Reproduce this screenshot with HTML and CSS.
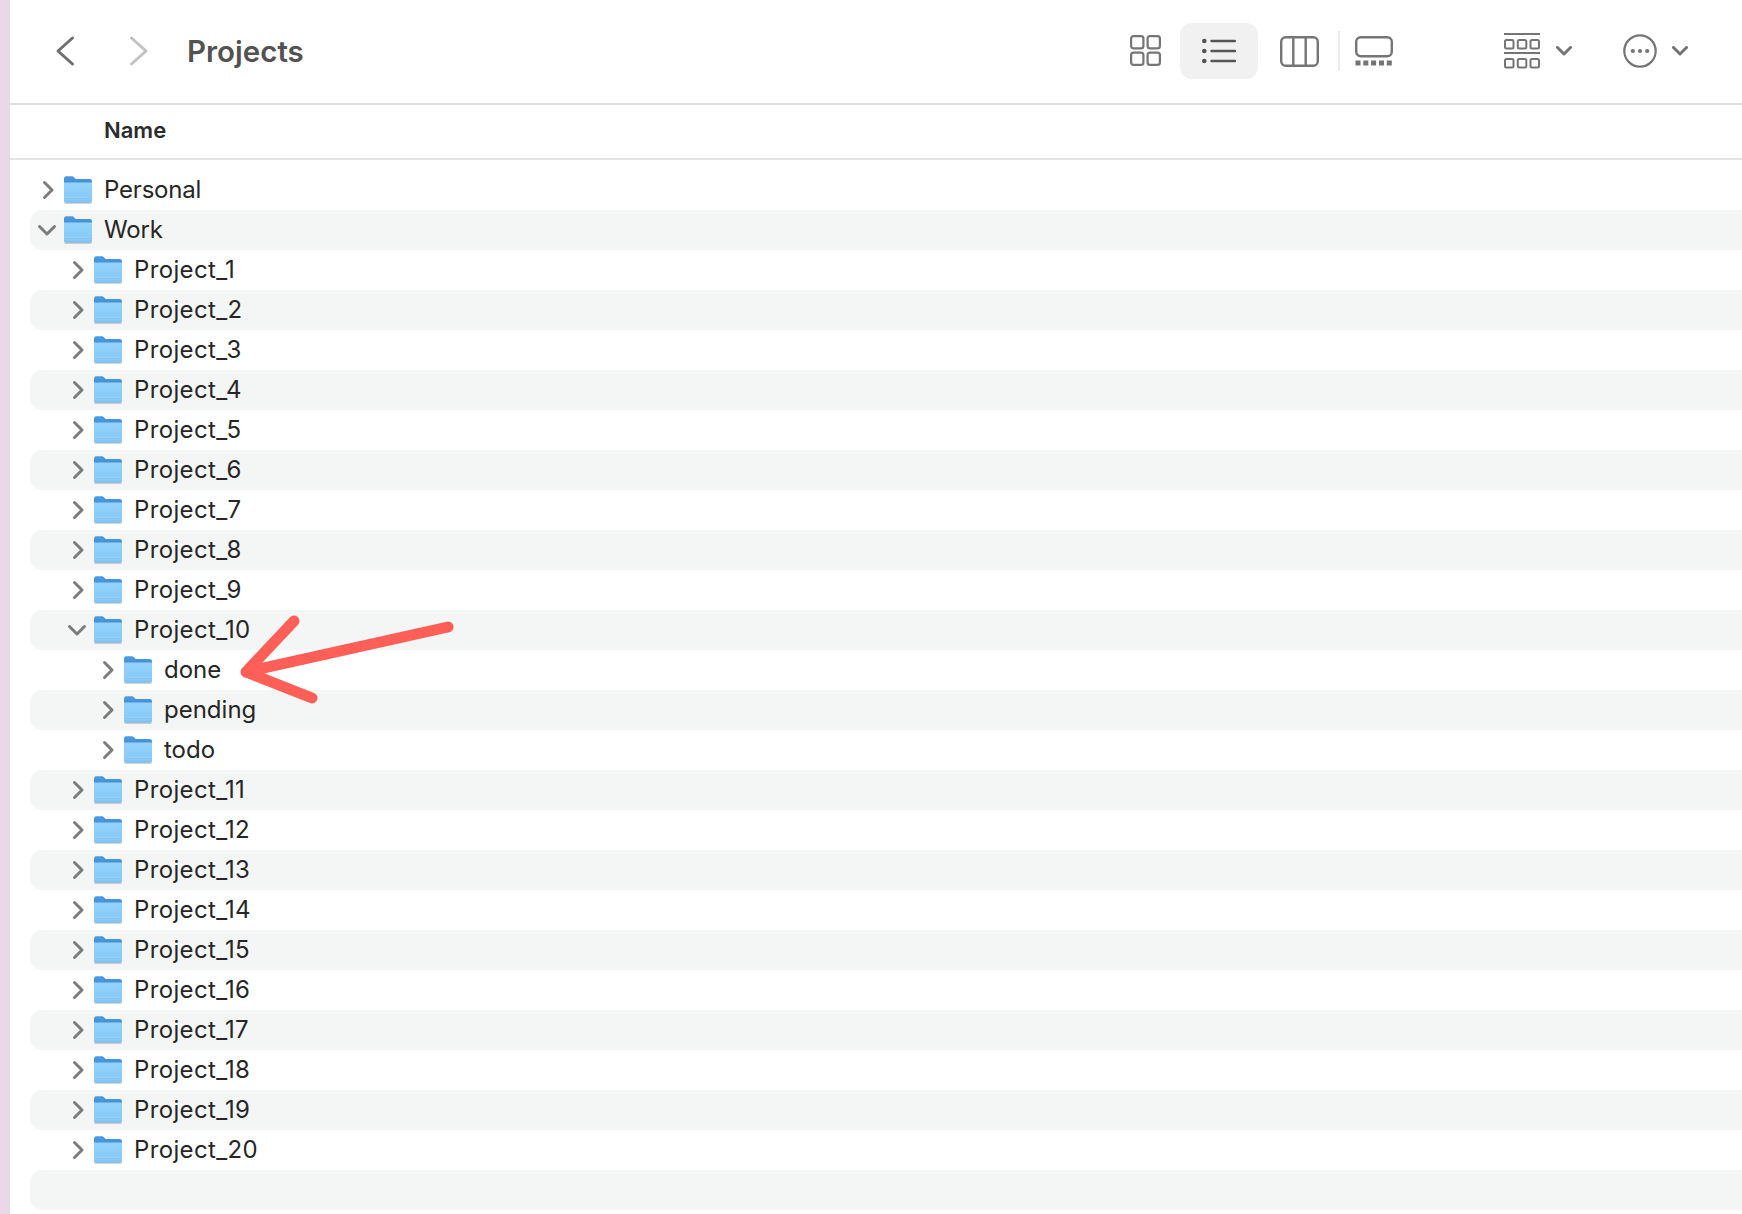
FILE: index.html
```html
<!DOCTYPE html>
<html lang="en">
<head>
<meta charset="utf-8">
<title>Projects</title>
<link rel="stylesheet" href="styles.css">
</head>
<body>
<svg class="defs" width="0" height="0" aria-hidden="true">
  <defs>
    <linearGradient id="fbody" x1="0" y1="0" x2="0" y2="1"><stop offset="0" stop-color="#93d3fc"/><stop offset="1" stop-color="#84c7f8"/></linearGradient>
    <linearGradient id="fband" x1="0" y1="0" x2="0" y2="1"><stop offset="0" stop-color="#4f9be0"/><stop offset="1" stop-color="#3b86d2"/></linearGradient>
    <symbol id="folder" viewBox="0 0 28 28">
      <path d="M0 2.500A2.300 2.300 0 0 1 2.300 .3H7.600c1.200 0 1.800.5 2.600 1.300L11.600 3H25.700A2.300 2.300 0 0 1 28 5.300V12H0Z" fill="url(#fband)"/>
      <path d="M0 6.600H28V24.700A2 2 0 0 1 26 26.700H2A2 2 0 0 1 0 24.700Z" fill="url(#fbody)"/>
      <path d="M0 21.500H28V24.700A2 2 0 0 1 26 26.700H2A2 2 0 0 1 0 24.700Z" fill="#83c3f2"/>
      <path d="M0 21.500H28M0 23.800H28" stroke="#9bd2f7" stroke-width=".8"/>
      <path d="M.5 27.300H27.500" stroke="#9a9a9a" stroke-opacity=".55" stroke-width="1"/>
    </symbol>
    <symbol id="right" viewBox="0 0 14 20"><path d="M3.500 2.500 11 10 3.500 17.500" fill="none" stroke="#7c7c7c" stroke-width="3" stroke-linecap="round" stroke-linejoin="round"/></symbol>
    <symbol id="down" viewBox="0 0 20 14"><path d="M2.500 3.500 10 11 17.500 3.500" fill="none" stroke="#7c7c7c" stroke-width="3" stroke-linecap="round" stroke-linejoin="round"/></symbol>
  </defs>
</svg>
<div class="app">
  <div class="strip"></div>
  <main class="finder">
    <header class="toolbar">
      <svg class="nav-back" width="20" height="32" viewBox="0 0 20 32"><path d="M17.500 3 3 16 17.500 29" fill="none" stroke="#6e6e6e" stroke-width="3" stroke-linecap="round" stroke-linejoin="round"/></svg>
      <svg class="nav-fwd" width="20" height="32" viewBox="0 0 20 32"><path d="M2.500 3 17 16 2.500 29" fill="none" stroke="#c2c2c2" stroke-width="3" stroke-linecap="round" stroke-linejoin="round"/></svg>
      <h1 class="title">Projects</h1>
      <div class="views">
        <span class="view view-grid">
          <svg width="32" height="32" viewBox="0 0 32 32" fill="none" stroke="#757575" stroke-width="2.200"><rect x="1.100" y="1.100" width="12.300" height="12.300" rx="2.400"/><rect x="17.600" y="1.100" width="12.300" height="12.300" rx="2.400"/><rect x="1.100" y="17.600" width="12.300" height="12.300" rx="2.400"/><rect x="17.600" y="17.600" width="12.300" height="12.300" rx="2.400"/></svg>
        </span>
        <span class="view view-active">
          <svg width="34" height="26" viewBox="0 0 34 26"><g fill="#555"><circle cx="2.300" cy="3" r="2.300"/><circle cx="2.300" cy="13" r="2.300"/><circle cx="2.300" cy="23" r="2.300"/></g><path d="M9.500 3H33M9.500 13H33M9.500 23H33" stroke="#555" stroke-width="2.400" stroke-linecap="round"/></svg>
        </span>
        <span class="view view-col">
          <svg width="39" height="31" viewBox="0 0 39 31" fill="none" stroke="#757575" stroke-width="2.400"><rect x="1.200" y="1.200" width="36.600" height="28.600" rx="4.500"/><path d="M13.300 1.200V29.800M25.700 1.200V29.800"/></svg>
        </span>
        <span class="view-sep"></span>
        <span class="view view-gal">
          <svg width="38" height="30" viewBox="0 0 38 30"><rect x="1.200" y="1.200" width="35.600" height="19" rx="4.500" fill="none" stroke="#757575" stroke-width="2.400"/><g fill="#757575"><rect x=".500" y="24.500" width="5" height="5"/><rect x="8.300" y="24.500" width="5" height="5"/><rect x="16.100" y="24.500" width="5" height="5"/><rect x="24" y="24.500" width="5" height="5"/><rect x="31.800" y="24.500" width="5" height="5"/></g></svg>
        </span>
      </div>
      <div class="menu menu-group">
        <svg width="36" height="36" viewBox="0 0 36 36"><path d="M0 1H36M0 20H36" stroke="#757575" stroke-width="2"/><g fill="none" stroke="#757575" stroke-width="2"><rect x="1" y="7" width="8.500" height="8.500" rx="1.500"/><rect x="13.800" y="7" width="8.500" height="8.500" rx="1.500"/><rect x="26.500" y="7" width="8.500" height="8.500" rx="1.500"/><rect x="1" y="26" width="8.500" height="8.500" rx="1.500"/><rect x="13.800" y="26" width="8.500" height="8.500" rx="1.500"/><rect x="26.500" y="26" width="8.500" height="8.500" rx="1.500"/></g></svg>
        <svg class="caret" width="16" height="10" viewBox="0 0 16 10"><path d="M1.500 1.500 8 8 14.500 1.500" fill="none" stroke="#757575" stroke-width="3" stroke-linecap="round" stroke-linejoin="round"/></svg>
      </div>
      <div class="menu menu-more">
        <svg width="34" height="34" viewBox="0 0 34 34"><circle cx="17" cy="17" r="15.700" fill="none" stroke="#757575" stroke-width="2.200"/><g fill="#757575"><circle cx="9.800" cy="17" r="2.100"/><circle cx="17" cy="17" r="2.100"/><circle cx="24.200" cy="17" r="2.100"/></g></svg>
        <svg class="caret caret-more" width="16" height="10" viewBox="0 0 16 10"><path d="M1.500 1.500 8 8 14.500 1.500" fill="none" stroke="#757575" stroke-width="3" stroke-linecap="round" stroke-linejoin="round"/></svg>
      </div>
    </header>
    <div class="col-head"><span class="col-name">Name</span></div>
    <ul class="list">
      <li class="row l0"><svg class="tw tw-r"><use href="#right"/></svg><svg class="fi"><use href="#folder"/></svg><span class="label">Personal</span></li>
      <li class="row l0"><svg class="tw tw-d"><use href="#down"/></svg><svg class="fi"><use href="#folder"/></svg><span class="label">Work</span></li>
      <li class="row l1"><svg class="tw tw-r"><use href="#right"/></svg><svg class="fi"><use href="#folder"/></svg><span class="label">Project_1</span></li>
      <li class="row l1"><svg class="tw tw-r"><use href="#right"/></svg><svg class="fi"><use href="#folder"/></svg><span class="label">Project_2</span></li>
      <li class="row l1"><svg class="tw tw-r"><use href="#right"/></svg><svg class="fi"><use href="#folder"/></svg><span class="label">Project_3</span></li>
      <li class="row l1"><svg class="tw tw-r"><use href="#right"/></svg><svg class="fi"><use href="#folder"/></svg><span class="label">Project_4</span></li>
      <li class="row l1"><svg class="tw tw-r"><use href="#right"/></svg><svg class="fi"><use href="#folder"/></svg><span class="label">Project_5</span></li>
      <li class="row l1"><svg class="tw tw-r"><use href="#right"/></svg><svg class="fi"><use href="#folder"/></svg><span class="label">Project_6</span></li>
      <li class="row l1"><svg class="tw tw-r"><use href="#right"/></svg><svg class="fi"><use href="#folder"/></svg><span class="label">Project_7</span></li>
      <li class="row l1"><svg class="tw tw-r"><use href="#right"/></svg><svg class="fi"><use href="#folder"/></svg><span class="label">Project_8</span></li>
      <li class="row l1"><svg class="tw tw-r"><use href="#right"/></svg><svg class="fi"><use href="#folder"/></svg><span class="label">Project_9</span></li>
      <li class="row l1"><svg class="tw tw-d"><use href="#down"/></svg><svg class="fi"><use href="#folder"/></svg><span class="label">Project_10</span></li>
      <li class="row l2"><svg class="tw tw-r"><use href="#right"/></svg><svg class="fi"><use href="#folder"/></svg><span class="label">done</span></li>
      <li class="row l2"><svg class="tw tw-r"><use href="#right"/></svg><svg class="fi"><use href="#folder"/></svg><span class="label">pending</span></li>
      <li class="row l2"><svg class="tw tw-r"><use href="#right"/></svg><svg class="fi"><use href="#folder"/></svg><span class="label">todo</span></li>
      <li class="row l1"><svg class="tw tw-r"><use href="#right"/></svg><svg class="fi"><use href="#folder"/></svg><span class="label">Project_11</span></li>
      <li class="row l1"><svg class="tw tw-r"><use href="#right"/></svg><svg class="fi"><use href="#folder"/></svg><span class="label">Project_12</span></li>
      <li class="row l1"><svg class="tw tw-r"><use href="#right"/></svg><svg class="fi"><use href="#folder"/></svg><span class="label">Project_13</span></li>
      <li class="row l1"><svg class="tw tw-r"><use href="#right"/></svg><svg class="fi"><use href="#folder"/></svg><span class="label">Project_14</span></li>
      <li class="row l1"><svg class="tw tw-r"><use href="#right"/></svg><svg class="fi"><use href="#folder"/></svg><span class="label">Project_15</span></li>
      <li class="row l1"><svg class="tw tw-r"><use href="#right"/></svg><svg class="fi"><use href="#folder"/></svg><span class="label">Project_16</span></li>
      <li class="row l1"><svg class="tw tw-r"><use href="#right"/></svg><svg class="fi"><use href="#folder"/></svg><span class="label">Project_17</span></li>
      <li class="row l1"><svg class="tw tw-r"><use href="#right"/></svg><svg class="fi"><use href="#folder"/></svg><span class="label">Project_18</span></li>
      <li class="row l1"><svg class="tw tw-r"><use href="#right"/></svg><svg class="fi"><use href="#folder"/></svg><span class="label">Project_19</span></li>
      <li class="row l1"><svg class="tw tw-r"><use href="#right"/></svg><svg class="fi"><use href="#folder"/></svg><span class="label">Project_20</span></li>
      <li class="row"></li>
    </ul>
  </main>
</div>
<svg class="arrow" width="240" height="110" viewBox="0 0 240 110"><path d="M214 12 12 57M60 6 12 57 78 83" fill="none" stroke="#ff5f57" stroke-width="11" stroke-linecap="round" stroke-linejoin="round"/></svg>
</body>
</html>
```

FILE: styles.css
```css
* { box-sizing: border-box; }

html, body {
  margin: 0;
  height: 100%;
  overflow: hidden;
  background: #fff;
}

body {
  font-family: "Inter", "Liberation Sans", sans-serif;
  color: #262626;
}

.defs {
  position: absolute;
}

.app {
  display: flex;
  height: 1214px;
}

.strip {
  flex: 0 0 10px;
  background: #e8d8ea;
  border-right: 1px solid #dcdcdc;
}

.finder {
  flex: 1;
  min-width: 0;
  display: flex;
  flex-direction: column;
}

.toolbar {
  flex: 0 0 105px;
  display: flex;
  align-items: center;
  padding: 0 54px 1px 45px;
  border-bottom: 2px solid #dedede;
}

.nav-fwd {
  margin-left: 54px;
}

.title {
  margin: 0 0 0 38px;
  font-size: 29.500px;
  font-weight: 600;
  color: #525252;
}

.views {
  margin-left: auto;
  display: flex;
  align-items: center;
}

.view {
  display: flex;
  align-items: center;
  justify-content: center;
  width: 78px;
  height: 56px;
  border-radius: 12px;
}

.view-grid {
  width: 68px;
}

.view-active {
  background: #f1f1f1;
}

.view-col {
  width: 80px;
  padding-left: 2px;
}

.view-sep {
  width: 2px;
  height: 40px;
  background: #ececec;
}

.view-gal {
  width: 70px;
  padding-right: 2px;
}

.menu {
  display: flex;
  align-items: center;
}

.menu-group {
  margin-left: 94px;
}

.menu-more {
  margin-left: 51px;
}

.caret {
  margin-left: 16px;
}

.caret-more {
  margin-left: 15px;
}

.col-head {
  flex: 0 0 55px;
  display: flex;
  align-items: center;
  padding: 0 0 3px 94px;
  border-bottom: 2px solid #e4e4e4;
}

.col-name {
  font-size: 22px;
  font-weight: 600;
  color: #2b2b2b;
}

.list {
  list-style: none;
  margin: 0;
  padding: 10px 0 0 20px;
}

.row {
  height: 40px;
  display: flex;
  align-items: center;
  font-size: 24px;
  border-radius: 12px 0 0 12px;
}

.row:nth-child(even) {
  background: #f4f5f5;
}

.label {
  margin-bottom: 2px;
}

.l0 { padding-left: 7px; letter-spacing: -.2px; }
.l1 { padding-left: 37px; letter-spacing: .35px; }
.l2 { padding-left: 67px; }

.tw {
  flex: none;
}

.tw-r {
  width: 14px;
  height: 20px;
  margin-left: 4px;
  margin-right: 9px;
}

.tw-d {
  width: 20px;
  height: 14px;
  margin-right: 7px;
}

.fi {
  flex: none;
  width: 28px;
  height: 28px;
  margin-right: 12px;
}

.arrow {
  position: absolute;
  left: 234px;
  top: 615px;
}
```
